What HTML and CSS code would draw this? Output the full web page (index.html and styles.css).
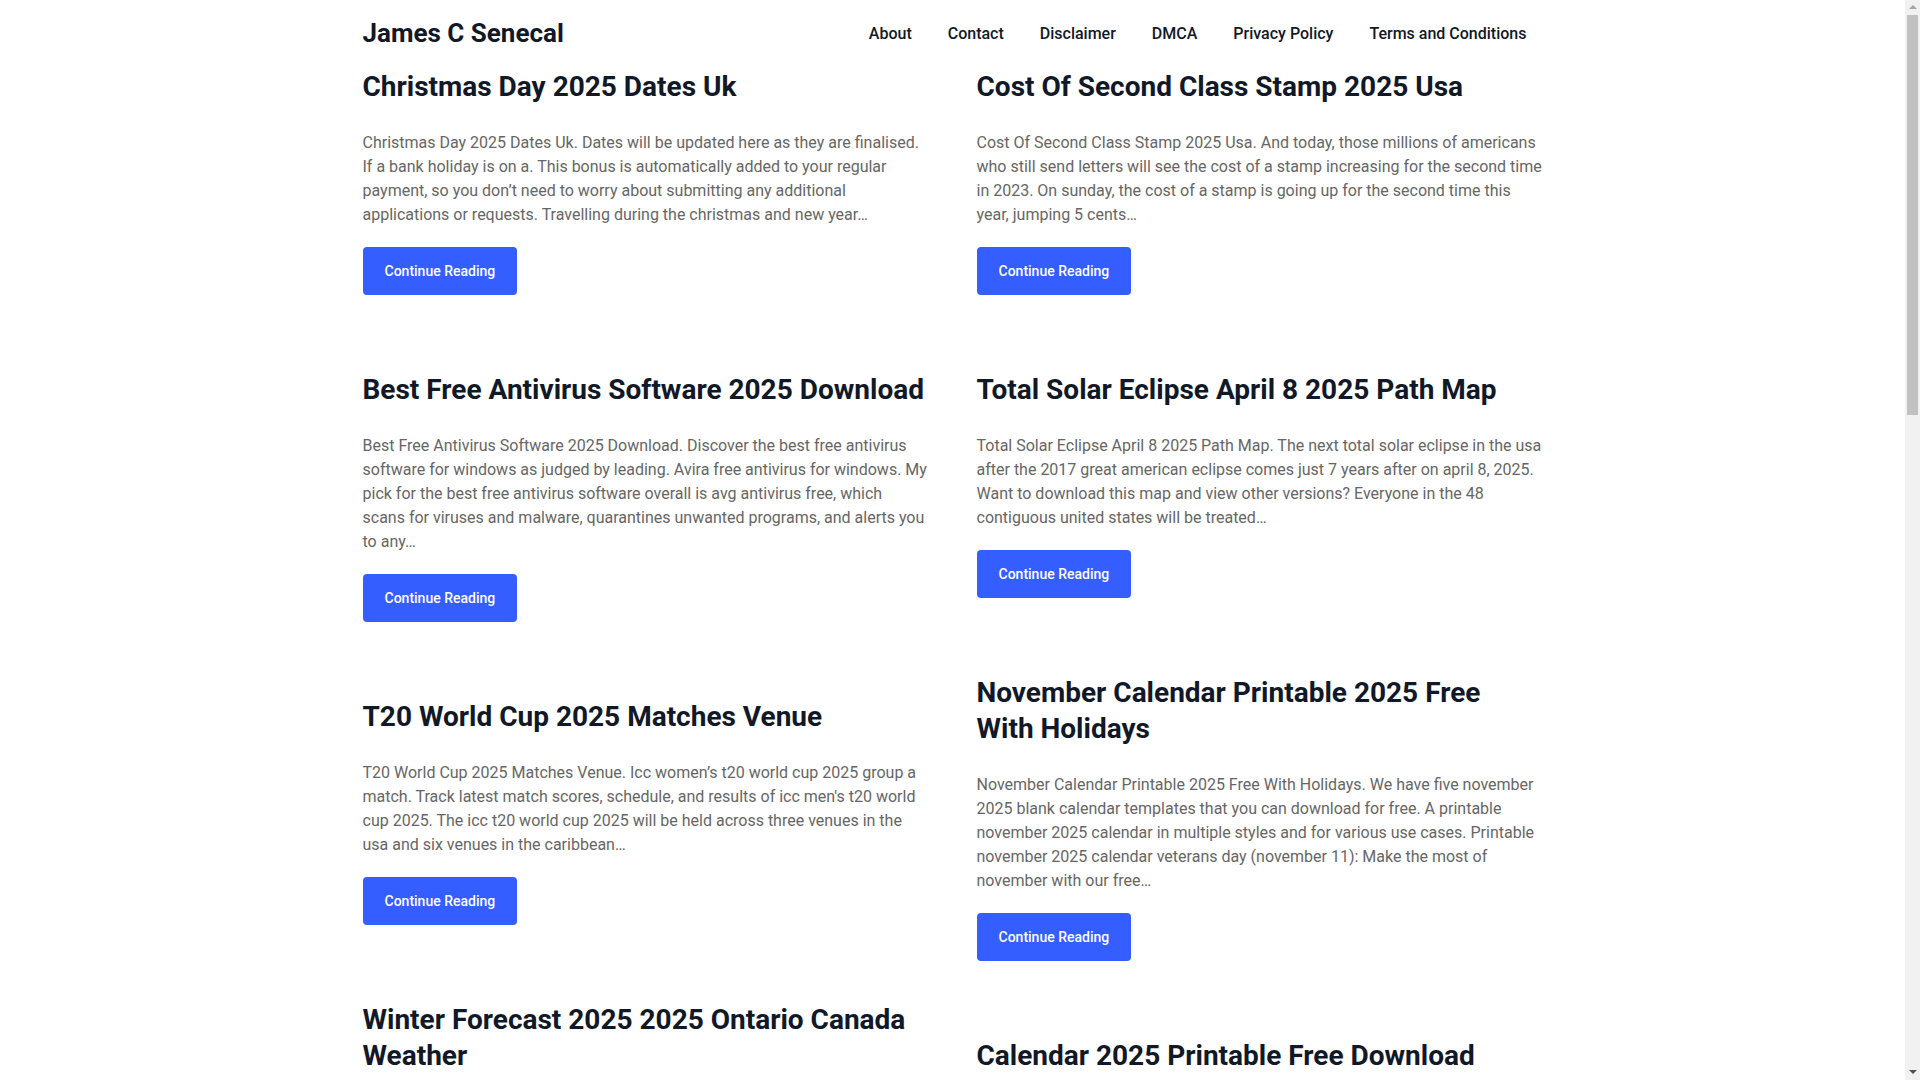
FILE: index.html
```html
<!doctype html>
<html lang="en">
<head>
    <meta charset="utf-8">
    <meta name="viewport" content="width=device-width, initial-scale=1">
    <title>James C Senecal</title>
    <link rel="stylesheet" href="styles.css">
</head>
<body>
    <header class="site-header">
        <div class="container header-inner">
            <a class="site-title" href="#">James C Senecal</a>
            <nav class="main-nav">
                <a href="#">About</a>
                <a href="#">Contact</a>
                <a href="#">Disclaimer</a>
                <a href="#">DMCA</a>
                <a href="#">Privacy Policy</a>
                <a href="#">Terms and Conditions</a>
            </nav>
        </div>
    </header>

    <main class="container posts">
        <div class="post-column">
            <article class="post">
                <h2 class="post-title"><a href="#">Christmas Day 2025 Dates Uk</a></h2>
                <p class="post-excerpt">Christmas Day 2025 Dates Uk. Dates will be updated here as they are finalised.<br>If a bank holiday is on a. This bonus is automatically added to your regular<br>payment, so you don&rsquo;t need to worry about submitting any additional<br>applications or requests. Travelling during the christmas and new year&hellip;</p>
                <a class="read-more" href="#">Continue Reading</a>
            </article>
            <article class="post">
                <h2 class="post-title"><a href="#">Best Free Antivirus Software 2025 Download</a></h2>
                <p class="post-excerpt">Best Free Antivirus Software 2025 Download. Discover the best free antivirus software for windows as judged by leading. Avira free antivirus for windows. My pick for the best free antivirus software overall is avg antivirus free, which scans for viruses and malware, quarantines unwanted programs, and alerts you to any&hellip;</p>
                <a class="read-more" href="#">Continue Reading</a>
            </article>
            <article class="post">
                <h2 class="post-title"><a href="#">T20 World Cup 2025 Matches Venue</a></h2>
                <p class="post-excerpt">T20 World Cup 2025 Matches Venue. Icc women&rsquo;s t20 world cup 2025 group a match. Track latest match scores, schedule, and results of icc men's t20 world cup 2025. The icc t20 world cup 2025 will be held across three venues in the usa and six venues in the caribbean&hellip;</p>
                <a class="read-more" href="#">Continue Reading</a>
            </article>
            <article class="post">
                <h2 class="post-title"><a href="#">Winter Forecast 2025 2025 Ontario Canada Weather</a></h2>
                <p class="post-excerpt">Winter Forecast 2025 2025 Ontario Canada Weather. See the latest outlook for the coming season across ontario, with temperature and snowfall trends for the winter months&hellip;</p>
                <a class="read-more" href="#">Continue Reading</a>
            </article>
        </div>

        <div class="post-column">
            <article class="post">
                <h2 class="post-title"><a href="#">Cost Of Second Class Stamp 2025 Usa</a></h2>
                <p class="post-excerpt">Cost Of Second Class Stamp 2025 Usa. And today, those millions of americans who still send letters will see the cost of a stamp increasing for the second time in 2023. On sunday, the cost of a stamp is going up for the second time this year, jumping 5 cents&hellip;</p>
                <a class="read-more" href="#">Continue Reading</a>
            </article>
            <article class="post">
                <h2 class="post-title"><a href="#">Total Solar Eclipse April 8 2025 Path Map</a></h2>
                <p class="post-excerpt">Total Solar Eclipse April 8 2025 Path Map. The next total solar eclipse in the usa after the 2017 great american eclipse comes just 7 years after on april 8, 2025. Want to download this map and view other versions? Everyone in the 48 contiguous united states will be treated&hellip;</p>
                <a class="read-more" href="#">Continue Reading</a>
            </article>
            <article class="post">
                <h2 class="post-title"><a href="#">November Calendar Printable 2025 Free With Holidays</a></h2>
                <p class="post-excerpt">November Calendar Printable 2025 Free With Holidays. We have five november 2025 blank calendar templates that you can download for free. A printable november 2025 calendar in multiple styles and for various use cases. Printable november 2025 calendar veterans day (november 11): Make the most of november with our free&hellip;</p>
                <a class="read-more" href="#">Continue Reading</a>
            </article>
            <article class="post">
                <h2 class="post-title"><a href="#">Calendar 2025 Printable Free Download</a></h2>
                <p class="post-excerpt">Calendar 2025 Printable Free Download. Print a yearly or monthly calendar for 2025 with holidays, in blank and editable layouts that you can download for free&hellip;</p>
                <a class="read-more" href="#">Continue Reading</a>
            </article>
        </div>
    </main>

    <!-- window scrollbar, as it shows in the screenshot -->
    <div class="scrollbar" aria-hidden="true">
        <span class="scroll-btn up"></span>
        <span class="scroll-thumb"></span>
        <span class="scroll-btn down"></span>
    </div>
</body>
</html>
```

FILE: styles.css
```css
body {
    margin: 0;
    padding-right: 15px;
    font-family: Roboto, "Liberation Sans", Arial, sans-serif;
    font-size: 16px;
    color: #666;
    background-color: #fff;
}
a {
    text-decoration: none;
    color: inherit;
}
.container {
    width: 1180px;
    margin: 0 auto;
}
.header-inner {
    display: flex;
    align-items: center;
    justify-content: space-between;
    height: 66px;
}
.site-title {
    font-size: 26px;
    font-weight: 700;
    color: #111827;
}
.main-nav {
    display: flex;
    gap: 4px;
}
.main-nav a {
    padding: 0 16px;
    font-size: 16px;
    font-weight: 500;
    color: #111827;
}
.posts {
    display: grid;
    grid-template-columns: 1fr 1fr;
    column-gap: 48px;
    padding-top: 3px;
    padding-bottom: 80px;
}
.post-column {
    display: flex;
    flex-direction: column;
    gap: 77px;
}
.post-title {
    margin: 0 0 26px;
    font-size: 28px;
    line-height: 36px;
    font-weight: 700;
    color: #111827;
}
.post-excerpt {
    margin: 0 0 20px;
    line-height: 24px;
}
.read-more {
    display: inline-block;
    padding: 0 22px;
    height: 48px;
    line-height: 48px;
    border-radius: 4px;
    background-color: #345eff;
    color: #fff;
    font-size: 14px;
    font-weight: 500;
}

.scrollbar {
    position: fixed;
    top: 0;
    right: 0;
    width: 15px;
    height: 100vh;
    display: flex;
    flex-direction: column;
    align-items: center;
    background-color: #f1f1f1;
}
.scroll-btn {
    width: 0;
    height: 0;
    border-left: 4px solid transparent;
    border-right: 4px solid transparent;
}
.scroll-btn.up {
    margin: 5px 0 6px;
    border-bottom: 4px solid #a3a3a3;
}
.scroll-btn.down {
    margin: auto 0 6px;
    border-top: 4px solid #505050;
}
.scroll-thumb {
    width: 11px;
    height: 400px;
    background-color: #c1c1c1;
}
```
